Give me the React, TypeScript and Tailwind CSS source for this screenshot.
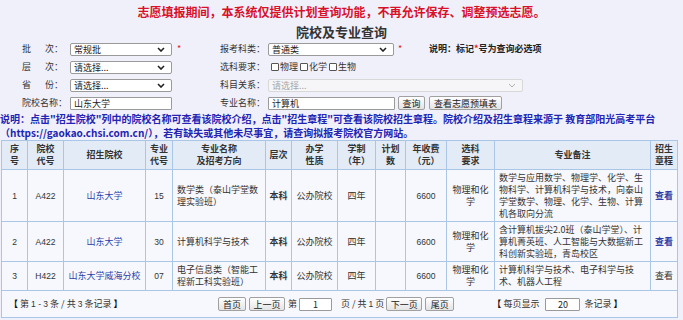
import React from "react";

const Chevron = ({ light }: { light?: boolean }) => (
  <svg width="8" height="5" viewBox="0 0 8 5" className="shrink-0">
    <path d="M1 1l3 3 3-3" stroke={light ? "#b0b0b0" : "#222"} strokeWidth={light ? 1 : 1.6} fill="none" />
  </svg>
);

function Sel({ w, text, disabled }: { w: string; text: string; disabled?: boolean }) {
  return (
    <div
      className={
        "h-[13px] flex items-center justify-between pl-[3px] pr-[6px] rounded-[2px] border " +
        w +
        (disabled ? " border-[#d8d8d8] bg-[#f6f6f8] text-[#a8a8a8]" : " border-[#9a9a9a] bg-white text-[#222]")
      }
    >
      <span className="leading-none">{text}</span>
      <Chevron light={disabled} />
    </div>
  );
}

function Inp({ w, text, center }: { w: string; text: string; center?: boolean }) {
  return (
    <div
      className={
        "h-[13px] flex items-center border border-[#9a9a9a] bg-white text-[#222] rounded-[1px] " +
        w +
        (center ? " justify-center" : " pl-[3px]")
      }
    >
      <span className="leading-none">{text}</span>
    </div>
  );
}

function Btn({ w, text, ml }: { w: string; text: string; ml: string }) {
  return (
    <div
      className={
        "h-[14px] flex items-center justify-center border border-[#a0a0a0] rounded-[2px] bg-gradient-to-b from-white to-[#e4e4e4] text-[#222] " +
        w +
        " " +
        ml
      }
    >
      <span className="leading-none">{text}</span>
    </div>
  );
}

function Label({ a, b }: { a: string; b?: string }) {
  return (
    <div className="w-[48px] shrink-0">
      {b ? (
        <div className="w-[41px] flex justify-between">
          <span>{a}</span>
          <span>{b}</span>
        </div>
      ) : (
        <span className="whitespace-nowrap">{a}</span>
      )}
    </div>
  );
}

const Star = () => <span className="text-[#e02020] text-[9px]">*</span>;

const Box = ({ t }: { t: string }) => (
  <span className="flex items-center mr-[2px]">
    <span className="inline-block w-[8px] h-[8px] border border-[#555] rounded-[1px] bg-white mr-[1px]" />
    <span>{t}</span>
  </span>
);

const th = "border border-[#a9c6e6] font-bold text-[#333] text-center align-middle leading-[12px] px-0";
const base = "border border-[#a9c6e6] text-center align-middle leading-[12px] px-0";
const td = base + " text-[#333]";
const num = base + " text-[#333] text-[8.5px] font-['Liberation_Sans',sans-serif]";
const numIn = "text-[8.5px] font-['Liberation_Sans',sans-serif]";
const link = base + " text-[#2f3fa8]";

export default function App() {
  return (
    <div className="w-[683px] h-[320px] overflow-hidden bg-[#f0f0fa] font-['Noto_Sans_CJK_SC',sans-serif] text-[9px] text-[#333]">
      <div className="h-[24px] flex items-center justify-center text-[12px] font-bold text-[#d8102a]">
        志愿填报期间，本系统仅提供计划查询功能，不再允许保存、调整预选志愿。
      </div>
      <div className="h-[16px] flex items-center justify-center text-[13px] font-bold text-[#333]">院校及专业查询</div>

      <div className="flex flex-col pl-[22px]">
        <div className="h-[18px] flex items-center">
          <div className="w-[198px] flex items-center shrink-0">
            <Label a="批" b="次：" />
            <Sel w="w-[102px]" text="常规批" />
            <span className="ml-[5px]"><Star /></span>
          </div>
          <Label a="报考科类：" />
          <Sel w="w-[126px]" text="普通类" />
          <span className="w-[35px] pl-[4px]"><Star /></span>
          <span className="font-bold text-[#222]">
            说明：标记<span className="text-[#e02020]">*</span>号为查询必选项
          </span>
        </div>
        <div className="h-[18px] flex items-center">
          <div className="w-[198px] flex items-center shrink-0">
            <Label a="层" b="次：" />
            <Sel w="w-[102px]" text="请选择..." />
          </div>
          <Label a="选科要求：" />
          <div className="flex items-center ml-[3px]">
            <Box t="物理" />
            <Box t="化学" />
            <Box t="生物" />
          </div>
        </div>
        <div className="h-[18px] flex items-center">
          <div className="w-[198px] flex items-center shrink-0">
            <Label a="省" b="份：" />
            <Sel w="w-[102px]" text="请选择..." />
          </div>
          <Label a="科目关系：" />
          <Sel w="w-[255px]" text="请选择..." disabled />
        </div>
        <div className="h-[18px] flex items-center">
          <div className="w-[198px] flex items-center shrink-0">
            <Label a="院校名称：" />
            <Inp w="w-[102px]" text="山东大学" />
          </div>
          <Label a="专业名称：" />
          <Inp w="w-[127px]" text="计算机" />
          <Btn w="w-[27px]" text="查询" ml="ml-[3px]" />
          <Btn w="w-[73px]" text="查看志愿预填表" ml="ml-[4px]" />
        </div>
      </div>

      <div className="h-[28px] text-[10px] leading-[14px] font-bold text-[#2323b4]">
        <div className="whitespace-nowrap">
          说明：点击"招生院校"列中的院校名称可查看该院校介绍，点击"招生章程"可查看该院校招生章程。院校介绍及招生章程来源于 教育部阳光高考平台
        </div>
        <div className="whitespace-nowrap">（https://gaokao.chsi.com.cn/），若有缺失或其他未尽事宜，请查询拟报考院校官方网站。</div>
      </div>

      <table className="ml-[1px] w-[676px] table-fixed border-collapse border border-[#a9c6e6]">
        <colgroup>
          <col className="w-[26px]" />
          <col className="w-[36px]" />
          <col className="w-[82px]" />
          <col className="w-[27px]" />
          <col className="w-[93px]" />
          <col className="w-[26px]" />
          <col className="w-[46px]" />
          <col className="w-[38px]" />
          <col className="w-[30px]" />
          <col className="w-[41px]" />
          <col className="w-[48px]" />
          <col className="w-[156px]" />
          <col className="w-[27px]" />
        </colgroup>
        <thead>
          <tr className="h-[29px] bg-[#e3ebf6]">
            <th className={th}>序<br />号</th>
            <th className={th}>院校<br />代号</th>
            <th className={th}>招生院校</th>
            <th className={th}>专业<br />代号</th>
            <th className={th}>专业名称<br />及招考方向</th>
            <th className={th}>层次</th>
            <th className={th}>办学<br />性质</th>
            <th className={th}>学制<br />（年）</th>
            <th className={th}>计划<br />数</th>
            <th className={th}>年收费<br />（元）</th>
            <th className={th}>选科<br />要求</th>
            <th className={th}>专业备注</th>
            <th className={th}>招生<br />章程</th>
          </tr>
        </thead>
        <tbody className="bg-[#f6f8fd]">
          <tr className="h-[52px]">
            <td className={num}>1</td>
            <td className={num}>A422</td>
            <td className={link}>山东大学</td>
            <td className={num}>15</td>
            <td className={td + " text-left pl-[4px] whitespace-nowrap"}>数学类（泰山学堂数<br />理实验班）</td>
            <td className={td + " font-bold"}>本科</td>
            <td className={td}>公办院校</td>
            <td className={td}>四年</td>
            <td className={td}></td>
            <td className={num}>6600</td>
            <td className={td}>物理和化<br />学</td>
            <td className={td + " text-left pl-[4px] whitespace-nowrap"}>
              数学与应用数学、物理学、化学、生<br />物科学、计算机科学与技术，向泰山<br />学堂数学、物理、化学、生物、计算<br />机各取向分流
            </td>
            <td className={link + " font-bold"}>查看</td>
          </tr>
          <tr className="h-[40px]">
            <td className={num}>2</td>
            <td className={num}>A422</td>
            <td className={link}>山东大学</td>
            <td className={num}>30</td>
            <td className={td + " text-left pl-[4px] whitespace-nowrap"}>计算机科学与技术</td>
            <td className={td + " font-bold"}>本科</td>
            <td className={td}>公办院校</td>
            <td className={td}>四年</td>
            <td className={td}></td>
            <td className={num}>6600</td>
            <td className={td}>物理和化<br />学</td>
            <td className={td + " text-left pl-[4px] whitespace-nowrap"}>
              含计算机拔尖2.0班（泰山学堂）、计<br />算机菁英班、人工智能与大数据新工<br />科创新实验班，青岛校区
            </td>
            <td className={link + " font-bold"}>查看</td>
          </tr>
          <tr className="h-[29px]">
            <td className={num}>3</td>
            <td className={num}>H422</td>
            <td className={link + " whitespace-nowrap"}>山东大学威海分校</td>
            <td className={num}>07</td>
            <td className={td + " text-left pl-[4px] whitespace-nowrap"}>电子信息类（智能工<br />程新工科实验班）</td>
            <td className={td + " font-bold"}>本科</td>
            <td className={td}>公办院校</td>
            <td className={td}>四年</td>
            <td className={td}></td>
            <td className={num}>6600</td>
            <td className={td}>物理和化<br />学</td>
            <td className={td + " text-left pl-[4px] whitespace-nowrap"}>
              计算机科学与技术、电子科学与技<br />术、机器人工程
            </td>
            <td className={td}>查看</td>
          </tr>
          <tr className="h-[27px]">
            <td colSpan={13} className="border border-[#a9c6e6] p-0 align-middle">
              <div className="flex items-center whitespace-nowrap">
                <div className="w-[216px] pl-[7px] shrink-0">
                  <span className="font-bold text-[#111]">【</span> 第 <span className={numIn}>1 - 3</span> 条 / 共 <span className={numIn}>3</span> 条记录 <span className="font-bold text-[#111]">】</span>
                </div>
                <Btn w="w-[28px]" text="首页" ml="ml-0" />
                <Btn w="w-[36px]" text="上一页" ml="ml-[3px]" />
                <span className="ml-[3px]">第</span>
                <div className="ml-[2px]"><Inp w="w-[33px]" text="1" center /></div>
                <span className="ml-[9px]">页 / 共 <span className={numIn}>1</span> 页</span>
                <Btn w="w-[36px]" text="下一页" ml="ml-[2px]" />
                <Btn w="w-[29px]" text="尾页" ml="ml-[3px]" />
                <span className="ml-[38px]"><span className="font-bold text-[#111]">【</span> 每页显示</span>
                <div className="ml-[6px]"><Inp w="w-[35px]" text="20" center /></div>
                <span className="ml-[4px]">条记录 <span className="font-bold text-[#111]">】</span></span>
              </div>
            </td>
          </tr>
        </tbody>
      </table>
    </div>
  );
}
